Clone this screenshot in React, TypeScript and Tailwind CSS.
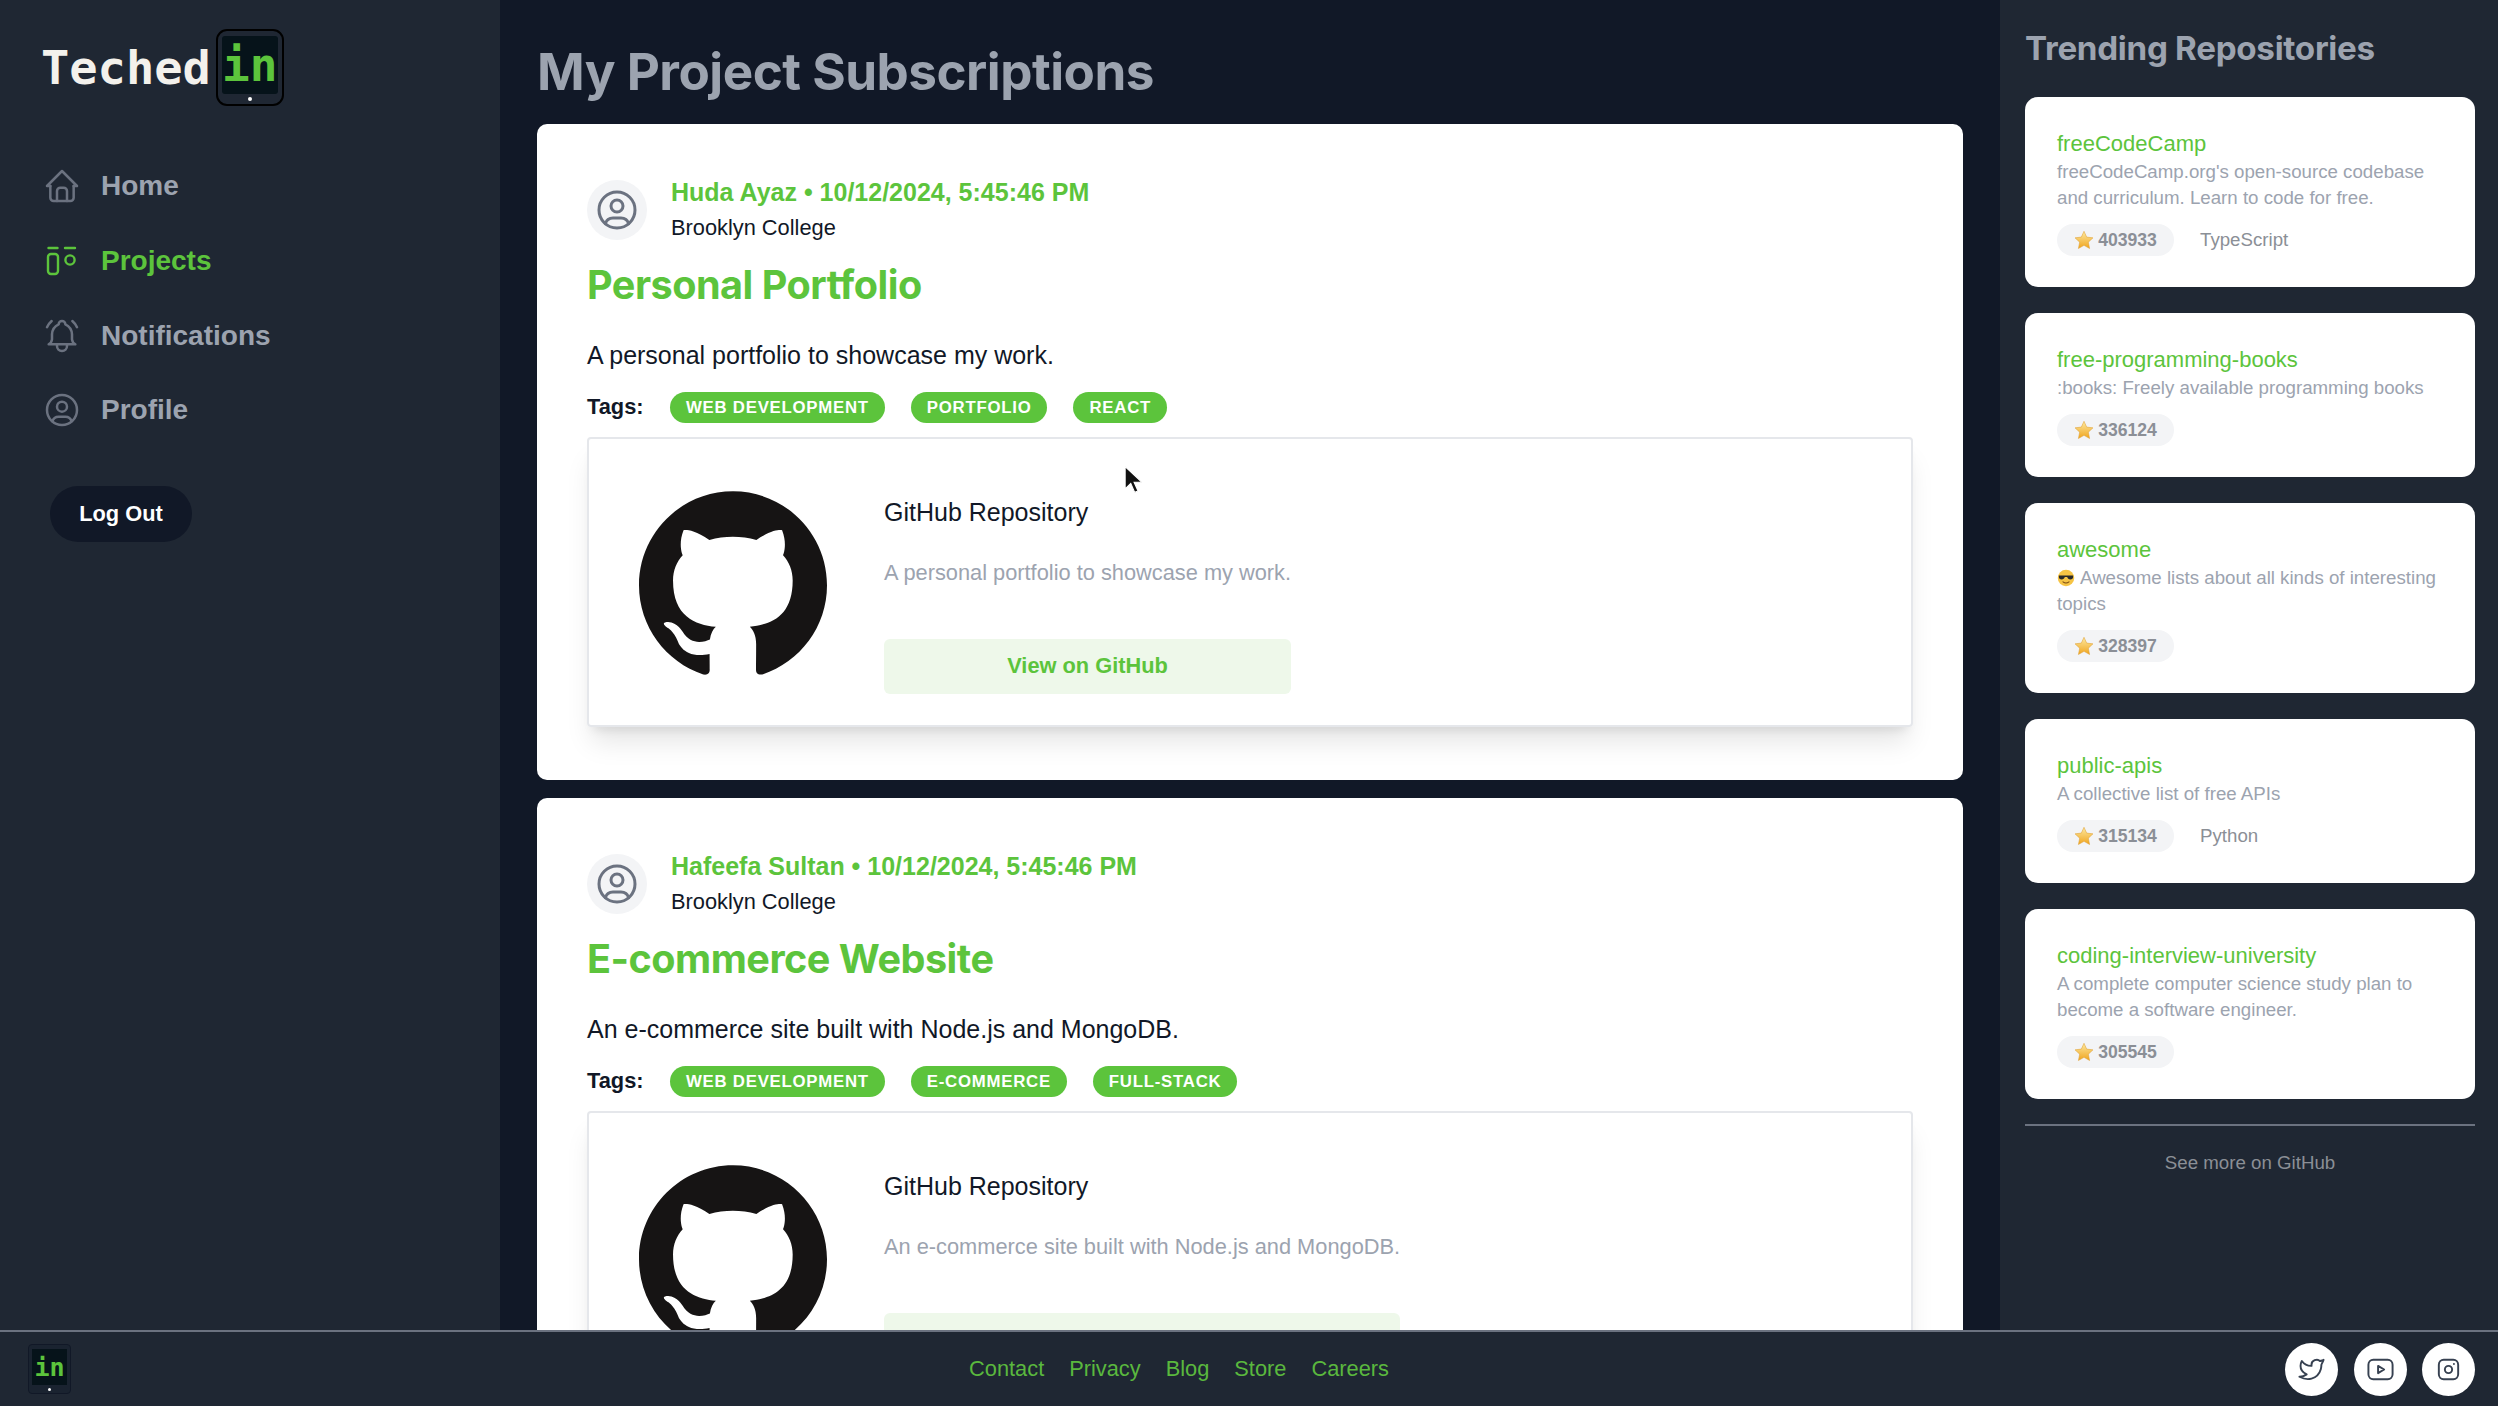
import { SiGithub } from "react-icons/si";
import {
  TbBellRinging,
  TbBrandInstagram,
  TbBrandTwitter,
  TbBrandYoutube,
  TbHome,
  TbUserCircle,
} from "react-icons/tb";

const sans = "font-['Liberation_Sans',Arial,sans-serif]";

const projects = [
  {
    author: "Huda Ayaz",
    title: "Personal Portfolio",
    description: "A personal portfolio to showcase my work.",
    tags: ["Web Development", "Portfolio", "React"],
  },
  {
    author: "Hafeefa Sultan",
    title: "E-commerce Website",
    description: "An e-commerce site built with Node.js and MongoDB.",
    tags: ["Web Development", "E-commerce", "Full-stack"],
  },
];

const repos = [
  {
    name: "freeCodeCamp",
    description: "freeCodeCamp.org's open-source codebase and curriculum. Learn to code for free.",
    stars: 403933,
    language: "TypeScript",
  },
  { name: "free-programming-books", description: ":books: Freely available programming books", stars: 336124 },
  {
    name: "awesome",
    emoji: true,
    description: "Awesome lists about all kinds of interesting topics",
    stars: 328397,
  },
  { name: "public-apis", description: "A collective list of free APIs", stars: 315134, language: "Python" },
  {
    name: "coding-interview-university",
    description: "A complete computer science study plan to become a software engineer.",
    stars: 305545,
  },
];

function ProjectsIcon() {
  return (
    <svg viewBox="0 0 40 40" className="h-10 w-10" fill="none" stroke="currentColor" strokeWidth="2.4" strokeLinecap="round">
      <path d="M6.5 7h9M23 7h10" />
      <rect x="6" y="13" width="10" height="20" rx="3" />
      <circle cx="28" cy="19" r="4.6" />
    </svg>
  );
}

function Star() {
  return (
    <svg viewBox="0 0 24 24" className="h-5 w-5 shrink-0">
      <defs>
        <linearGradient id="gold" x1="0" y1="0" x2="0" y2="1">
          <stop offset="0" stopColor="#fde9a0" />
          <stop offset="1" stopColor="#f0a51e" />
        </linearGradient>
      </defs>
      <path
        d="M12 1.5l3.2 7 7.6.9-5.6 5.2 1.5 7.6L12 18.4l-6.7 3.8 1.5-7.6L1.2 9.4l7.6-.9z"
        fill="url(#gold)"
        stroke="#dd9a2b"
        strokeWidth="0.6"
      />
    </svg>
  );
}

function SunglassesFace() {
  return (
    <svg viewBox="0 0 24 24" className="mr-[5px] inline-block h-[18px] w-[18px] align-[-3px]">
      <circle cx="12" cy="12" r="11" fill="#f6c445" />
      <path d="M2.5 8.5h19v2.2c0 2-1.400 3.300-3.700 3.300-2.200 0-3.600-1.300-4.200-3.300h-3.200c-.6 2-2 3.300-4.200 3.300-2.300 0-3.700-1.300-3.700-3.300z" fill="#2a2a2a" />
      <path d="M8 17.200c2.400 1.700 5.600 1.700 8 0" fill="none" stroke="#7a4b12" strokeWidth="1.4" strokeLinecap="round" />
    </svg>
  );
}

function TechedLogo({ small }: { small?: boolean }) {
  if (small) {
    return (
      <div className="flex h-[50px] w-[43px] flex-col items-center rounded-[4px] border border-[#111827] bg-[#1a2330] px-[3px] pt-[4px]">
        <div className="flex h-[36px] w-full items-center justify-center bg-[#06131a] font-['DejaVu_Sans_Mono',monospace] text-[25px] font-bold leading-none text-[#5cc43c]">
          in
        </div>
        <div className="mt-[3px] h-[3px] w-[3px] rounded-full bg-white" />
      </div>
    );
  }
  return (
    <div className="flex h-[77px] w-[68px] flex-col items-center rounded-[11px] border-2 border-black bg-[#1f2733] px-[4px] pt-[5px]">
      <div className="flex h-[58px] w-full items-center justify-center rounded-[3px] bg-[#06131a] font-['DejaVu_Sans_Mono',monospace] text-[46px] font-bold leading-none text-[#5cc43c]">
        in
      </div>
      <div className="mt-[3px] h-[4px] w-[4px] rounded-full bg-white" />
    </div>
  );
}

function Sidebar() {
  const linkClass = "flex h-[40px] items-center gap-[19px] text-[28px] font-bold";
  return (
    <aside className={`${sans} flex w-[500px] shrink-0 flex-col bg-[#1f2733] pl-[42px]`}>
      <div className="-ml-[1px] mt-[29px] flex items-center gap-[5px]">
        <span className="font-['DejaVu_Sans_Mono',monospace] text-[47px] font-bold leading-none text-[#f3f1ec]">Teched</span>
        <TechedLogo />
      </div>
      <nav className="mt-[60px] flex flex-col gap-[34.800px] text-[#9ca3af]">
        <a className={linkClass}>
          <TbHome size={40} strokeWidth={1.5} className="text-[#6b7280]" />
          Home
        </a>
        <a className={`${linkClass} text-[#5cc43c]`}>
          <ProjectsIcon />
          Projects
        </a>
        <a className={linkClass}>
          <TbBellRinging size={40} strokeWidth={1.5} className="text-[#6b7280]" />
          Notifications
        </a>
        <a className={linkClass}>
          <TbUserCircle size={40} strokeWidth={1.5} className="text-[#6b7280]" />
          Profile
        </a>
      </nav>
      <button className="ml-[8px] mt-[56px] h-[56px] w-[142px] rounded-full bg-[#111827] text-[21.800px] font-bold text-white">
        Log Out
      </button>
    </aside>
  );
}

function ProjectCard({ project }: { project: (typeof projects)[number] }) {
  return (
    <article className={`${sans} shrink-0 rounded-[10px] bg-white px-[50px] pb-[53px] pt-[51px] text-[#111827]`}>
      <div className="flex items-center gap-[24px]">
        <div className="flex h-[60px] w-[60px] items-center justify-center rounded-full bg-[#f3f4f6] text-[#6b7280]">
          <TbUserCircle size={48} strokeWidth={1.5} />
        </div>
        <div>
          <p className="text-[25px] font-bold leading-[35px] text-[#5cc43c]">
            {project.author} • 10/12/2024, 5:45:46 PM
          </p>
          <p className="text-[21.800px] leading-[35px]">Brooklyn College</p>
        </div>
      </div>
      <h2 className="mt-[14px] font-['Inter',sans-serif] text-[39.600px] font-bold leading-[52px] tracking-[-0.5px] text-[#5cc43c]">
        {project.title}
      </h2>
      <p className="mt-[26px] text-[25px] leading-[36px]">{project.description}</p>
      <div className="mt-[19px] flex h-[31px] items-center">
        <span className="w-[83px] text-[21.800px] font-bold">Tags:</span>
        <div className="flex gap-[26px]">
          {project.tags.map((tag) => (
            <span
              key={tag}
              className="flex h-[31px] items-center rounded-full bg-[#5cc43c] px-[16px] text-[16.800px] font-bold uppercase tracking-[0.75px] text-white"
            >
              {tag}
            </span>
          ))}
        </div>
      </div>
      <div className="mt-[14px] flex h-[290px] rounded-[4px] border-2 border-[#e5e7eb] pl-[50px] shadow-[0_20px_25px_-5px_rgba(0,0,0,0.1),0_8px_10px_-6px_rgba(0,0,0,0.1)]">
        <SiGithub size={188} className="mt-[50px] shrink-0 text-[#161414]" />
        <div className="ml-[57px] mt-[55px] flex w-fit flex-col self-start">
          <p className="text-[25px] leading-[36px]">GitHub Repository</p>
          <p className="mt-[26px] text-[21.800px] leading-[34px] text-[#9ca3af]">{project.description}</p>
          <button className="mt-[49px] h-[55px] rounded-[6px] bg-[#eef8ea] text-[21.800px] font-bold text-[#5cc43c]">
            View on GitHub
          </button>
        </div>
      </div>
    </article>
  );
}

function RepoCard({ repo }: { repo: (typeof repos)[number] }) {
  return (
    <div className="rounded-[13px] bg-white px-[32px] pb-[31px] pt-[33px]">
      <p className="text-[22px] leading-[28px] text-[#5cc43c]">{repo.name}</p>
      <p className="mt-[1px] text-[18.700px] leading-[26px] text-[#9ca3af]">
        {repo.emoji && <SunglassesFace />}
        {repo.description}
      </p>
      <div className="mt-[13px] flex h-[32px] items-center gap-[26px]">
        <span className="flex h-[32px] w-[117px] items-center justify-center gap-[4px] rounded-full bg-[#f3f4f6] text-[17.600px] font-bold text-[#8b8f96]">
          <Star />
          {repo.stars}
        </span>
        {repo.language && <span className="text-[18.700px] text-[#8b8f96]">{repo.language}</span>}
      </div>
    </div>
  );
}

function Trending() {
  return (
    <aside className={`${sans} flex w-[498px] shrink-0 flex-col bg-[#1f2733] pl-[25px] pr-[23px]`}>
      <h2 className="mt-[26px] font-['Inter',sans-serif] text-[33.200px] font-bold leading-[44px] tracking-[-0.3px] text-[#9ca3af]">
        Trending Repositories
      </h2>
      <div className="mt-[27px] flex flex-col gap-[26px]">
        {repos.map((repo) => (
          <RepoCard key={repo.name} repo={repo} />
        ))}
      </div>
      <div className="mt-[25px] border-t-2 border-[#6b7280] pt-[23px] text-center text-[18.700px] leading-[28px] text-[#8b8f96]">
        See more on GitHub
      </div>
    </aside>
  );
}

function Footer() {
  const socials = [TbBrandTwitter, TbBrandYoutube, TbBrandInstagram];
  return (
    <footer className={`${sans} flex h-[76px] shrink-0 items-center justify-between border-t-2 border-[#6b7280] bg-[#1f2733] pl-[28px] pr-[23px]`}>
      <TechedLogo small />
      <nav className="ml-[2px] flex gap-[25px] text-[21.800px] text-[#5ab83e]">
        <a>Contact</a>
        <a>Privacy</a>
        <a>Blog</a>
        <a>Store</a>
        <a>Careers</a>
      </nav>
      <div className="flex gap-[15.500px]">
        {socials.map((Icon, i) => (
          <span key={i} className="flex h-[53px] w-[53px] items-center justify-center rounded-full bg-white text-[#374151]">
            <Icon size={29} strokeWidth={1.6} />
          </span>
        ))}
      </div>
    </footer>
  );
}

export default function App() {
  return (
    <div className="relative flex h-[1406px] w-[2498px] flex-col overflow-hidden bg-[#111827]">
      <div className="flex min-h-0 flex-1">
        <Sidebar />
        <main className="flex min-w-0 flex-1 flex-col gap-[18px] overflow-hidden px-[37px] pt-[39px]">
          <h1 className="-mb-[18px] h-[85px] shrink-0 font-['Inter',sans-serif] text-[51.200px] font-bold leading-[64px] tracking-[-0.5px] text-[#9ca3af]">
            My Project Subscriptions
          </h1>
          {projects.map((project) => (
            <ProjectCard key={project.author} project={project} />
          ))}
        </main>
        <Trending />
      </div>
      <Footer />
      {/* mouse pointer captured in the recording */}
      <svg viewBox="0 0 16 26" className="absolute left-[1124px] top-[465px] h-[30px] w-[18px]">
        <path d="M1 1v20l5-5 3.500 8 3-1.300-3.500-7.700H16z" fill="#111" stroke="#fff" strokeWidth="1" />
      </svg>
    </div>
  );
}
